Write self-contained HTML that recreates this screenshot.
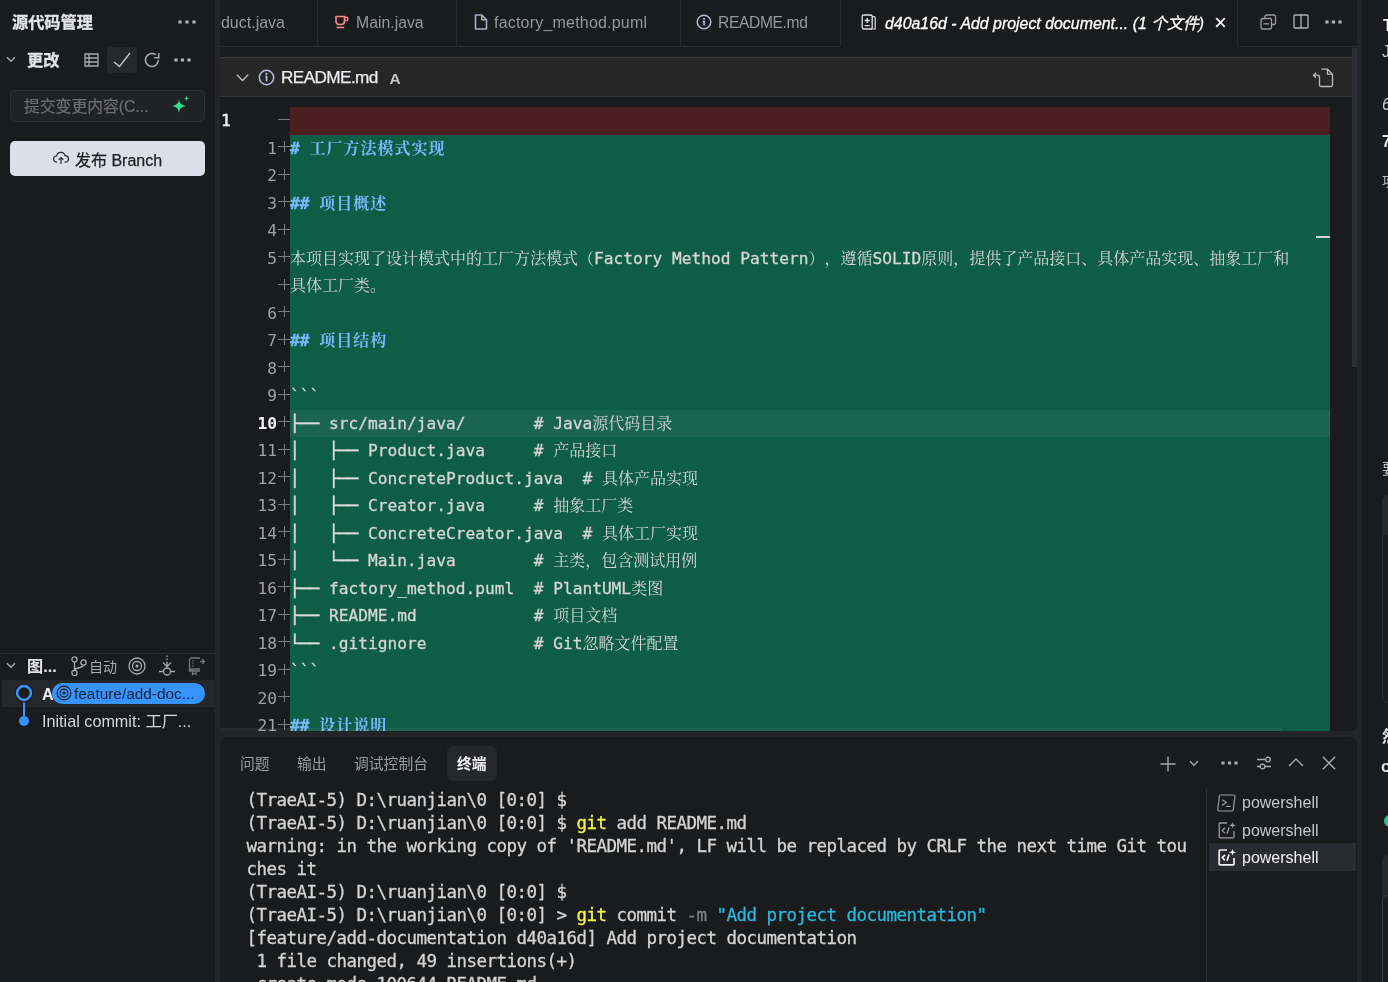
<!DOCTYPE html>
<html lang="zh-CN">
<head>
<meta charset="utf-8">
<title>源代码管理</title>
<style>
*{box-sizing:border-box;margin:0;padding:0}
html,body{width:1388px;height:982px;overflow:hidden;background:#1a1b1d}
body{position:relative;font-family:"Liberation Sans","Noto Sans CJK SC",sans-serif;color:#d0d1d6;font-size:16px}
.abs{position:absolute}
.t{position:absolute;white-space:pre;line-height:1}
svg{position:absolute;overflow:visible}
/* sidebar */
#sidebar{position:absolute;left:0;top:0;width:215px;height:982px;background:#1a1b1d}
#sash1{position:absolute;left:215px;top:0;width:5px;height:982px;background:#222326}
/* editor */
#tabs{position:absolute;left:220px;top:0;width:1137px;height:47px;background:#1a1b1d;overflow:hidden}
.tabsep{position:absolute;top:0;width:1px;height:46px;background:#2a2b2e}
#hdr{position:absolute;left:220px;top:57px;width:1132px;height:40px;background:#262626;border-top:1px solid #383838;border-bottom:1px solid #383838}
#code{position:absolute;left:220px;top:97px;width:1137px;height:634px;overflow:hidden;border-radius:0 0 7px 0;font-family:"DejaVu Sans Mono","Liberation Mono","Noto Serif CJK SC",monospace;font-size:16.2px;text-spacing-trim:space-all;-webkit-text-stroke:0.3px}
.row{position:absolute;left:0;height:27.5px;line-height:27.5px;white-space:pre}
.ln{position:absolute;right:1080px;top:0;color:#a0a1a6;text-align:right;-webkit-text-stroke:0}
.b{-webkit-text-stroke:0.500px;color:#dcdcdc}
.pl{position:absolute;left:58px;top:11.500px;width:12px;height:1px;background:#7a7b80}
.pl:after{content:"";position:absolute;left:5.5px;top:-5px;width:1px;height:11px;background:#7a7b80}
.tx{position:absolute;left:70px;top:0;color:#d6d6d6}
.h{color:#79b8ff;font-weight:bold}
.z{font-size:16px;text-spacing-trim:space-all;-webkit-text-stroke:0}
.h .z{letter-spacing:1px}
/* terminal */
#term{position:absolute;left:220px;top:737px;width:1137px;height:245px;background:#1a1b1d;border-top-left-radius:8px;border-top-right-radius:8px;overflow:hidden}
.tl{position:absolute;left:26.400px;white-space:pre;font-family:"DejaVu Sans Mono","Liberation Mono",monospace;font-size:17.5px;letter-spacing:-0.535px;line-height:23px;height:23px;color:#d4d4d4;-webkit-text-stroke:0.3px}
.y{color:#f5f543}.c{color:#29b8db}.g{color:#7f8085}
</style>
</head>
<body>
<div id="root" style="position:absolute;left:0;top:0;width:1388px;height:982px;will-change:transform">
<div id="sidebar">
<div class="t" style="left:12px;top:14px;font-size:16.200px;font-weight:bold;color:#e4e5ea;-webkit-text-stroke:0.300px">源代码管理</div>
<svg style="left:178px;top:20px" width="18" height="4" viewBox="0 0 18 4"><rect x="0.4" y="0.600" width="3.200" height="2.800" rx="0.200" fill="#b4b5ba"/><rect x="7.4" y="0.600" width="3.200" height="2.800" rx="0.200" fill="#b4b5ba"/><rect x="14.4" y="0.600" width="3.200" height="2.800" rx="0.200" fill="#b4b5ba"/></svg>
<!-- changes row -->
<svg style="left:6px;top:56px" width="10" height="7" viewBox="0 0 10 7"><path d="M1 1.2 L5 5.2 L9 1.2" fill="none" stroke="#a9aab0" stroke-width="1.4"/></svg>
<div class="t" style="left:27px;top:52px;font-size:16.200px;font-weight:bold;color:#e4e5ea;-webkit-text-stroke:0.300px">更改</div>
<svg style="left:84px;top:53px" width="15" height="14" viewBox="0 0 15 14"><path d="M1 1 H14 V13 H1 Z M1 5 H14 M1 9 H14 M5 1 V13" fill="none" stroke="#a9aab0" stroke-width="1.3"/></svg>
<div class="abs" style="left:107px;top:47px;width:30px;height:26px;background:#26272a;border-radius:3px"></div>
<svg style="left:113px;top:52px" width="18" height="16" viewBox="0 0 18 16"><path d="M1 10 L6.5 14.5 L17 1" fill="none" stroke="#c8c9ce" stroke-width="1.3"/></svg>
<svg style="left:144px;top:52px" width="16" height="16" viewBox="0 0 16 16"><path d="M14.400 8 A6.500 6.500 0 1 1 11.700 2.700" fill="none" stroke="#a9aab0" stroke-width="1.600"/><path d="M10.200 5.700 H14.700 V1.200" fill="none" stroke="#a9aab0" stroke-width="1.600"/></svg>
<svg style="left:174px;top:58px" width="17" height="4" viewBox="0 0 17 4"><rect x="0.4" y="0.600" width="3.200" height="2.800" rx="0.200" fill="#b4b5ba"/><rect x="6.9" y="0.600" width="3.200" height="2.800" rx="0.200" fill="#b4b5ba"/><rect x="13.4" y="0.600" width="3.200" height="2.800" rx="0.200" fill="#b4b5ba"/></svg>
<!-- input -->
<div class="abs" style="left:10px;top:90px;width:195px;height:32px;background:#212225;border:1px solid #2f3034;border-radius:5px"></div>
<div class="t" style="left:24px;top:99px;font-size:15.8px;color:#6e6f74;-webkit-text-stroke:0.2px">提交变更内容(C...</div>
<svg style="left:171px;top:95px" width="19" height="19" viewBox="0 0 19 19"><path d="M8 4 C8.6 8.6 9.4 9.4 15 11 C9.4 12.6 8.6 13.4 8 18 C7.4 13.4 6.6 12.6 1 11 C6.6 9.4 7.4 8.6 8 4 Z" fill="#32e08c"/><path d="M15.5 0.5 C15.8 2.6 16.1 2.9 18 3.4 C16.1 3.9 15.8 4.2 15.5 6.3 C15.2 4.2 14.9 3.9 13 3.4 C14.9 2.9 15.2 2.6 15.5 0.5 Z" fill="#32e08c"/></svg>
<!-- button -->
<div class="abs" style="left:10px;top:141px;width:195px;height:35px;background:#dcdee8;border-radius:5px"></div>
<svg style="left:53px;top:151px" width="16" height="14" viewBox="0 0 16 14"><path d="M4.2 11.2 H3.8 A3.1 3.1 0 0 1 3.6 5 A4.3 4.3 0 0 1 12 4.6 A3.3 3.3 0 0 1 12.4 11.2 H11.6" fill="none" stroke="#2a2b30" stroke-width="1.2"/><path d="M8 13 V6.6 M5.6 8.9 L8 6.5 L10.4 8.9" fill="none" stroke="#2a2b30" stroke-width="1.2"/></svg>
<div class="t" style="left:75px;top:152.500px;font-size:16px;color:#1e1f23;-webkit-text-stroke:0.25px">发布 Branch</div>
<!-- graph -->
<div class="abs" style="left:0;top:653px;width:215px;height:1px;background:#2b2c30"></div>
<svg style="left:6px;top:662px" width="10" height="7" viewBox="0 0 10 7"><path d="M1 1.2 L5 5.2 L9 1.2" fill="none" stroke="#a9aab0" stroke-width="1.4"/></svg>
<div class="t" style="left:27px;top:658px;font-size:16.2px;font-weight:bold;color:#e4e5ea">图...</div>
<svg style="left:70px;top:656px" width="18" height="21" viewBox="0 0 18 21"><circle cx="4.5" cy="3.5" r="2.6" fill="none" stroke="#a9aab0" stroke-width="1.3"/><circle cx="4.5" cy="17" r="2.6" fill="none" stroke="#a9aab0" stroke-width="1.3"/><circle cx="13.5" cy="6.5" r="2.6" fill="none" stroke="#a9aab0" stroke-width="1.3"/><path d="M4.5 6.1 V14.4 M13.5 9.1 C13.5 12.5 4.5 11 4.5 14.4" fill="none" stroke="#a9aab0" stroke-width="1.3"/></svg>
<div class="t" style="left:89px;top:660px;font-size:14px;color:#a9aab0">自动</div>
<svg style="left:128px;top:657px" width="18" height="18" viewBox="0 0 18 18"><circle cx="9" cy="9" r="8" fill="none" stroke="#a9aab0" stroke-width="1.3"/><circle cx="9" cy="9" r="4.5" fill="none" stroke="#a9aab0" stroke-width="1.3"/><circle cx="9" cy="9" r="1.6" fill="#a9aab0"/></svg>
<svg style="left:158px;top:655px" width="18" height="22" viewBox="0 0 18 22"><path d="M9 0.5 V2 M9 3.5 V5 M9 6.5 V11.5 M5 7.5 L9 11.5 L13 7.5" fill="none" stroke="#a9aab0" stroke-width="1.3"/><circle cx="9" cy="16.5" r="3.5" fill="none" stroke="#a9aab0" stroke-width="1.3"/><path d="M1 16.5 H5.5 M12.5 16.5 H17" fill="none" stroke="#a9aab0" stroke-width="1.3"/></svg>
<svg style="left:188px;top:657px" width="18" height="18" viewBox="0 0 18 18"><path d="M12 1 H3.5 A2 2 0 0 0 1.5 3 V14 H12" fill="none" stroke="#77787d" stroke-width="1.3"/><path d="M1.5 14 A2 2 0 0 1 3.5 12 H12" fill="none" stroke="#77787d" stroke-width="1.3"/><path d="M4.5 4 H5.5 M4.5 6.5 H5.5 M4.5 9 H5.5" stroke="#77787d" stroke-width="1.3"/><path d="M12 4.5 H16.5 M14.3 2.3 L16.5 4.5 L14.3 6.7" fill="none" stroke="#77787d" stroke-width="1.3"/><path d="M4.5 14 V17.5 L6.2 16.3 L8 17.5 V14" fill="none" stroke="#77787d" stroke-width="1.2"/></svg>
<div class="abs" style="left:2px;top:680px;width:213px;height:27px;background:#26272b"></div>
<div class="abs" style="left:23.300px;top:700px;width:1.400px;height:16px;background:#3794ff"></div>
<svg style="left:14px;top:683px" width="20" height="20" viewBox="0 0 20 20"><circle cx="10" cy="10" r="9.400" fill="#1a1b1d"/><circle cx="10" cy="10" r="6.900" fill="#1a1b1d" stroke="#3794ff" stroke-width="2.500"/></svg>
<div class="t" style="left:42px;top:686px;font-size:16.2px;font-weight:bold;color:#f0f0f3">A</div>
<div class="abs" style="left:52px;top:682.500px;width:153px;height:21.500px;background:#3794ff;border-radius:10.750px"></div>
<svg style="left:56px;top:685px" width="16" height="16" viewBox="0 0 16 16"><circle cx="8" cy="8" r="6.9" fill="none" stroke="#1a1b1d" stroke-width="1.1"/><circle cx="8" cy="8" r="3.9" fill="none" stroke="#1a1b1d" stroke-width="1.1"/><circle cx="8" cy="8" r="1.4" fill="#1a1b1d"/></svg>
<div class="t" style="left:74px;top:686px;font-size:15.4px;color:#14233a">feature/add-doc...</div>
<svg style="left:18px;top:715px" width="12" height="12" viewBox="0 0 12 12"><circle cx="6" cy="6" r="5" fill="#3794ff"/></svg>
<div class="t" style="left:42px;top:713px;font-size:16.2px;color:#d6d7dc">Initial commit: 工厂...</div>
</div>
<div class="abs" style="left:215px;top:0;width:1147px;height:982px;background:#232427"></div>
<div class="abs" style="left:220px;top:0;width:1137px;height:731px;background:#1a1b1d;border-radius:0 0 7px 0"></div>
<div id="tabs">
<div class="abs" style="left:0;top:46px;width:620px;height:1px;background:#2a2b2e"></div>
<div class="abs" style="left:1017px;top:46px;width:120px;height:1px;background:#2a2b2e"></div>
<div class="t" style="right:1072px;top:15px;font-size:16px;color:#96979f">Product.java</div>
<div class="tabsep" style="left:97px"></div>
<svg style="left:114px;top:14px" width="16" height="16" viewBox="0 0 16 16"><path d="M2 2.500 H10.500 V7.300 A3.200 3.200 0 0 1 7.300 10.500 H5.200 A3.200 3.200 0 0 1 2 7.300 Z" fill="none" stroke="#f08a85" stroke-width="1.600" stroke-linejoin="round"/><path d="M10.500 3.200 H12.200 A1.700 1.700 0 0 1 12.200 6.600 H10.500" fill="none" stroke="#f08a85" stroke-width="1.500"/><path d="M2.600 13.500 H10.200" stroke="#f08a85" stroke-width="1.600"/></svg>
<div class="t" style="left:136px;top:15px;font-size:15.8px;color:#96979f">Main.java</div>
<div class="tabsep" style="left:236px"></div>
<svg style="left:254px;top:14px" width="14" height="16" viewBox="0 0 14 16"><path d="M1.500 1 H7.800 L12.500 5.700 V15 H1.500 Z M7.800 1 V5.700 H12.500" fill="none" stroke="#a9aec6" stroke-width="1.600" stroke-linejoin="round"/></svg>
<div class="t" style="left:274px;top:15px;font-size:16px;letter-spacing:0.2px;color:#96979f">factory_method.puml</div>
<div class="tabsep" style="left:460px"></div>
<svg style="left:476px;top:14px" width="16" height="16" viewBox="0 0 16 16"><circle cx="8" cy="8" r="6.800" fill="none" stroke="#aeb4d2" stroke-width="1.500"/><path d="M6.900 7.200 H8.100 V11.600" fill="none" stroke="#aeb4d2" stroke-width="1.600"/><circle cx="8" cy="4.700" r="1.050" fill="#aeb4d2"/></svg>
<div class="t" style="left:498px;top:15px;font-size:15.600px;letter-spacing:-0.350px;color:#96979f">README.md</div>
<div class="tabsep" style="left:620px"></div>
<svg style="left:641px;top:14px" width="16" height="16" viewBox="0 0 16 16"><path d="M1.200 2.400 A1.400 1.400 0 0 1 2.600 1 H9.800 A1.400 1.400 0 0 1 11.200 2.400 V13.600 A1.400 1.400 0 0 1 9.800 15 H2.600 A1.400 1.400 0 0 1 1.200 13.600 Z" fill="none" stroke="#e4e4e8" stroke-width="1.300"/><path d="M11.200 2.600 H12.800 A1.400 1.400 0 0 1 14.200 4 V15 H10" fill="none" stroke="#e4e4e8" stroke-width="1.200"/><path d="M3.700 6.500 H8.700 M6.200 4 V9 M3.700 11.600 H8.700" stroke="#e4e4e8" stroke-width="1.300"/></svg>
<div class="t" style="left:665px;top:15.500px;font-size:15.900px;font-style:italic;color:#ffffff;-webkit-text-stroke:0.300px">d40a16d - Add project document... (1 个文件)</div>
<svg style="left:995px;top:17px" width="11" height="11" viewBox="0 0 11 11"><path d="M1.2 1.2 L9.8 9.8 M9.8 1.2 L1.2 9.8" stroke="#f0f0f3" stroke-width="1.9"/></svg>
<div class="tabsep" style="left:1017px"></div>
<svg style="left:1040px;top:14px" width="17" height="16" viewBox="0 0 17 16"><path d="M5 4 V2.5 A1.5 1.5 0 0 1 6.5 1 H14 A1.5 1.5 0 0 1 15.5 2.500 V9 A1.500 1.500 0 0 1 14 10.500 H12" fill="none" stroke="#9c9da3" stroke-width="1.3"/><rect x="1" y="4.500" width="10.500" height="10.500" rx="1.500" fill="none" stroke="#9c9da3" stroke-width="1.3"/><path d="M3.500 9.800 H9" stroke="#9c9da3" stroke-width="1.3"/></svg>
<svg style="left:1073px;top:14px" width="16" height="15" viewBox="0 0 16 15"><rect x="1" y="1" width="14" height="13" rx="1" fill="none" stroke="#b4b5ba" stroke-width="1.3"/><path d="M8 1 V14" stroke="#b4b5ba" stroke-width="1.3"/></svg>
<svg style="left:1105px;top:20px" width="17" height="4" viewBox="0 0 17 4"><rect x="0.4" y="0.600" width="3.200" height="2.800" rx="0.200" fill="#b4b5ba"/><rect x="6.9" y="0.600" width="3.200" height="2.800" rx="0.200" fill="#b4b5ba"/><rect x="13.4" y="0.600" width="3.200" height="2.800" rx="0.200" fill="#b4b5ba"/></svg>
</div>
<div id="hdr">
<svg style="left:16px;top:16px" width="13" height="8" viewBox="0 0 13 8"><path d="M0.800 0.800 L6.500 6.500 L12.200 0.800" fill="none" stroke="#c0c1c6" stroke-width="1.300"/></svg>
<svg style="left:38px;top:11px" width="17" height="17" viewBox="0 0 17 17"><circle cx="8.500" cy="8.500" r="7.200" fill="none" stroke="#b8bfdc" stroke-width="1.500"/><path d="M7.300 7.600 H8.600 V12.300" fill="none" stroke="#b8bfdc" stroke-width="1.700"/><circle cx="8.500" cy="4.900" r="1.100" fill="#b8bfdc"/></svg>
<div class="t" style="left:61px;top:11px;font-size:17.200px;letter-spacing:-0.600px;color:#ececf0;-webkit-text-stroke:0.250px">README.md</div>
<div class="t" style="left:169.500px;top:12.500px;font-size:15.500px;font-weight:bold;color:#c4c5ca">A</div>
<svg style="left:1092px;top:10px" width="22" height="20" viewBox="0 0 22 20"><path d="M9.500 1.200 H15.500 L20.500 6.200 V17 A1.500 1.500 0 0 1 19 18.500 H9 A1.500 1.500 0 0 1 7.500 17 V9.500 A2.300 2.300 0 0 0 5.200 7.200 H1.500" fill="none" stroke="#b9bac0" stroke-width="1.300"/><path d="M15.500 1.200 V6.200 H20.500" fill="none" stroke="#b9bac0" stroke-width="1.300"/><path d="M4 4.700 L1.500 7.200 L4 9.700" fill="none" stroke="#b9bac0" stroke-width="1.300"/></svg>
</div>
<div class="abs" style="left:1352px;top:48px;width:5px;height:319px;background:#2d2e31"></div>
<div id="code">
<div class="abs" style="left:70px;top:10px;width:1040px;height:27.5px;background:#4b1f20"></div>
<div class="abs" style="left:70px;top:37.5px;width:1040px;height:600px;background:#0e5d45"></div>
<div class="abs" style="left:70px;top:312.5px;width:1040px;height:27.5px;background:#19654f"></div>
<div class="abs" style="left:1096px;top:139px;width:14px;height:2px;background:#cfd0d4"></div>
<div class="row" style="top:10.0px;width:1137px"><span class="abs" style="left:1px;top:0;color:#f0f0f3;-webkit-text-stroke:0.500px">1</span><span class="abs" style="left:58px;top:12px;width:12px;height:1px;background:#7a7b80"></span></div>
<div class="row" style="top:37.5px;width:1137px"><span class="ln">1</span><span class="pl"></span><span class="tx"><span class="h"># <span class="z">工厂方法模式实现</span></span></span></div>
<div class="row" style="top:65.0px;width:1137px"><span class="ln">2</span><span class="pl"></span><span class="tx"></span></div>
<div class="row" style="top:92.5px;width:1137px"><span class="ln">3</span><span class="pl"></span><span class="tx"><span class="h">## <span class="z">项目概述</span></span></span></div>
<div class="row" style="top:120.0px;width:1137px"><span class="ln">4</span><span class="pl"></span><span class="tx"></span></div>
<div class="row" style="top:147.5px;width:1137px"><span class="ln">5</span><span class="pl"></span><span class="tx"><span class="z">本项目实现了设计模式中的工厂方法模式（</span>Factory Method Pattern<span class="z">），遵循</span>SOLID<span class="z">原则，提供了产品接口、具体产品实现、抽象工厂和</span></span></div>
<div class="row" style="top:175.0px;width:1137px"><span class="ln"></span><span class="pl"></span><span class="tx"><span class="z">具体工厂类。</span></span></div>
<div class="row" style="top:202.5px;width:1137px"><span class="ln">6</span><span class="pl"></span><span class="tx"></span></div>
<div class="row" style="top:230.0px;width:1137px"><span class="ln">7</span><span class="pl"></span><span class="tx"><span class="h">## <span class="z">项目结构</span></span></span></div>
<div class="row" style="top:257.5px;width:1137px"><span class="ln">8</span><span class="pl"></span><span class="tx"></span></div>
<div class="row" style="top:285.0px;width:1137px"><span class="ln">9</span><span class="pl"></span><span class="tx">```</span></div>
<div class="row" style="top:312.5px;width:1137px"><span class="ln" style="color:#f4f4f6;font-weight:bold">10</span><span class="pl"></span><span class="tx"><span class="b">├──</span> src/main/java/       # Java<span class="z">源代码目录</span></span></div>
<div class="row" style="top:340.0px;width:1137px"><span class="ln">11</span><span class="pl"></span><span class="tx"><span class="b">│</span>   <span class="b">├──</span> Product.java     # <span class="z">产品接口</span></span></div>
<div class="row" style="top:367.5px;width:1137px"><span class="ln">12</span><span class="pl"></span><span class="tx"><span class="b">│</span>   <span class="b">├──</span> ConcreteProduct.java  # <span class="z">具体产品实现</span></span></div>
<div class="row" style="top:395.0px;width:1137px"><span class="ln">13</span><span class="pl"></span><span class="tx"><span class="b">│</span>   <span class="b">├──</span> Creator.java     # <span class="z">抽象工厂类</span></span></div>
<div class="row" style="top:422.5px;width:1137px"><span class="ln">14</span><span class="pl"></span><span class="tx"><span class="b">│</span>   <span class="b">├──</span> ConcreteCreator.java  # <span class="z">具体工厂实现</span></span></div>
<div class="row" style="top:450.0px;width:1137px"><span class="ln">15</span><span class="pl"></span><span class="tx"><span class="b">│</span>   <span class="b">└──</span> Main.java        # <span class="z">主类，包含测试用例</span></span></div>
<div class="row" style="top:477.5px;width:1137px"><span class="ln">16</span><span class="pl"></span><span class="tx"><span class="b">├──</span> factory_method.puml  # PlantUML<span class="z">类图</span></span></div>
<div class="row" style="top:505.0px;width:1137px"><span class="ln">17</span><span class="pl"></span><span class="tx"><span class="b">├──</span> README.md            # <span class="z">项目文档</span></span></div>
<div class="row" style="top:532.5px;width:1137px"><span class="ln">18</span><span class="pl"></span><span class="tx"><span class="b">└──</span> .gitignore           # Git<span class="z">忽略文件配置</span></span></div>
<div class="row" style="top:560.0px;width:1137px"><span class="ln">19</span><span class="pl"></span><span class="tx">```</span></div>
<div class="row" style="top:587.5px;width:1137px"><span class="ln">20</span><span class="pl"></span><span class="tx"></span></div>
<div class="row" style="top:615.0px;width:1137px"><span class="ln">21</span><span class="pl"></span><span class="tx"><span class="h">## <span class="z">设计说明</span></span></span></div>
<div class="abs" style="left:0;top:631px;width:1061px;height:3px;background:rgba(160,165,175,0.110)"></div>
</div>
<div id="term">
<div class="t" style="left:20px;top:20px;font-size:14.8px;color:#9a9ba1">问题</div>
<div class="t" style="left:77px;top:20px;font-size:14.8px;color:#9a9ba1">输出</div>
<div class="t" style="left:134px;top:20px;font-size:14.8px;color:#9a9ba1">调试控制台</div>
<div class="abs" style="left:227px;top:9px;width:50px;height:35px;background:#26272b;border-radius:6px"></div>
<div class="t" style="left:237px;top:20px;font-size:14.8px;font-weight:bold;color:#f2f2f5">终端</div>
<div class="tl" style="top:52.1px">(TraeAI-5) D:\ruanjian\0 [0:0] $ </div>
<div class="tl" style="top:75.1px">(TraeAI-5) D:\ruanjian\0 [0:0] $ <span class="y">git</span> add README.md</div>
<div class="tl" style="top:98.1px">warning: in the working copy of 'README.md', LF will be replaced by CRLF the next time Git tou</div>
<div class="tl" style="top:121.1px">ches it</div>
<div class="tl" style="top:144.1px">(TraeAI-5) D:\ruanjian\0 [0:0] $ </div>
<div class="tl" style="top:167.1px">(TraeAI-5) D:\ruanjian\0 [0:0] &gt; <span class="y">git</span> commit <span class="g">-m</span> <span class="c">"Add project documentation"</span></div>
<div class="tl" style="top:190.1px">[feature/add-documentation d40a16d] Add project documentation</div>
<div class="tl" style="top:213.1px"> 1 file changed, 49 insertions(+)</div>
<div class="tl" style="top:236.1px"> create mode 100644 README.md</div>
<svg style="left:940px;top:19px" width="16" height="16" viewBox="0 0 16 16"><path d="M8 0.500 V15.500 M0.500 8 H15.500" stroke="#a9aab3" stroke-width="1.400"/></svg>
<svg style="left:969px;top:23px" width="10" height="7" viewBox="0 0 10 7"><path d="M1 1.200 L5 5.200 L9 1.200" fill="none" stroke="#a9aab3" stroke-width="1.400"/></svg>
<svg style="left:1001px;top:24px" width="17" height="4" viewBox="0 0 17 4"><rect x="0.4" y="0.600" width="3.200" height="2.800" rx="0.200" fill="#a9aab3"/><rect x="6.9" y="0.600" width="3.200" height="2.800" rx="0.200" fill="#a9aab3"/><rect x="13.4" y="0.600" width="3.200" height="2.800" rx="0.200" fill="#a9aab3"/></svg>
<svg style="left:1036px;top:18px" width="16" height="16" viewBox="0 0 16 16"><path d="M1 4.500 H9.500 M1 11.500 H4 M9 11.500 H15" stroke="#a9aab3" stroke-width="1.300"/><circle cx="12" cy="4.500" r="2.300" fill="none" stroke="#a9aab3" stroke-width="1.300"/><circle cx="6.500" cy="11.500" r="2.300" fill="none" stroke="#a9aab3" stroke-width="1.300"/></svg>
<svg style="left:1068px;top:21px" width="16" height="9" viewBox="0 0 16 9"><path d="M1 8 L8 1 L15 8" fill="none" stroke="#a9aab3" stroke-width="1.400"/></svg>
<svg style="left:1102px;top:19px" width="14" height="14" viewBox="0 0 14 14"><path d="M0.800 0.800 L13.200 13.200 M13.200 0.800 L0.800 13.200" stroke="#a9aab3" stroke-width="1.400"/></svg>
<div class="abs" style="left:986px;top:51px;width:1px;height:200px;background:#2f3034"></div>
<div class="abs" style="left:989px;top:106px;width:147px;height:28px;background:#2a2b30"></div>
<svg style="left:997px;top:57px" width="19" height="18" viewBox="0 0 19 18"><path d="M3.300 1 H17 A1 1 0 0 1 18 2.200 L16.200 15.800 A1.300 1.300 0 0 1 15 17 H1.800 A1 1 0 0 1 0.800 15.800 L2.300 2.200 A1.300 1.300 0 0 1 3.300 1 Z" fill="none" stroke="#9a9ba1" stroke-width="1.200"/><path d="M5.300 5.800 L9.300 8.600 L4.800 11.600 M9 12.500 H13.500" fill="none" stroke="#9a9ba1" stroke-width="1.200"/></svg>
<svg style="left:998px;top:84px" width="19" height="18" viewBox="0 0 19 18"><path d="M9 2 H2 A0.800 0.800 0 0 0 1.200 2.800 V16 A0.800 0.800 0 0 0 2 16.800 H15.200 A0.800 0.800 0 0 0 16 16 V10" fill="none" stroke="#9a9ba1" stroke-width="1.3"/><path d="M7 6.800 L4.300 9.600 L7 12.400 M11 6.500 L9 12.700" fill="none" stroke="#9a9ba1" stroke-width="1.3"/><path d="M14.500 0.500 C14.900 3.300 15.400 3.800 18.300 4.300 C15.400 4.800 14.900 5.300 14.500 8.100 C14.100 5.300 13.600 4.800 10.700 4.300 C13.600 3.800 14.100 3.300 14.500 0.500 Z" fill="#9a9ba1"/></svg>
<svg style="left:998px;top:111px" width="19" height="18" viewBox="0 0 19 18"><path d="M9 2 H2 A0.800 0.800 0 0 0 1.200 2.800 V16 A0.800 0.800 0 0 0 2 16.800 H15.200 A0.800 0.800 0 0 0 16 16 V10" fill="none" stroke="#f2f2f5" stroke-width="1.7"/><path d="M7 6.800 L4.300 9.600 L7 12.400 M11 6.500 L9 12.700" fill="none" stroke="#f2f2f5" stroke-width="1.7"/><path d="M14.500 0.500 C14.900 3.300 15.400 3.800 18.300 4.300 C15.400 4.800 14.900 5.300 14.500 8.100 C14.100 5.300 13.600 4.800 10.700 4.300 C13.600 3.800 14.100 3.300 14.500 0.500 Z" fill="#f2f2f5"/></svg>
<div class="t" style="left:1022px;top:58px;font-size:16px;color:#c4c5ca">powershell</div>
<div class="t" style="left:1022px;top:86px;font-size:16px;color:#c4c5ca">powershell</div>
<div class="t" style="left:1022px;top:113px;font-size:16px;color:#f2f2f5">powershell</div>
</div>
<div id="right" class="abs" style="left:1362px;top:0;width:26px;height:982px;background:#1a1b1d;overflow:hidden">
<div class="t" style="left:21px;top:18px;font-size:16px;font-weight:bold;color:#f0f0f3">T</div>
<div class="t" style="left:20px;top:44px;font-size:16px;color:#d0d1d6">J</div>
<div class="t" style="left:20px;top:97px;font-size:16px;font-style:italic;color:#d0d1d6">6</div>
<div class="t" style="left:20px;top:134px;font-size:16px;font-weight:bold;color:#e4e5ea">7</div>
<div class="t" style="left:20px;top:175px;font-size:13px;color:#c4c5ca">项</div>
<div class="t" style="left:20px;top:461px;font-size:15px;color:#c4c5ca">要</div>
<div class="abs" style="left:20px;top:495px;width:40px;height:208px;border:1px solid #2e2f33;border-radius:6px;background:#1c1d20"></div>
<div class="abs" style="left:20px;top:495px;width:40px;height:40px;border-top-left-radius:6px;background:#26272b"></div>
<div class="t" style="left:20px;top:729px;font-size:16px;font-weight:bold;color:#e4e5ea">然</div>
<div class="t" style="left:19px;top:757.500px;font-size:17px;font-weight:bold;color:#e4e5ea">c</div>
<div class="abs" style="left:22px;top:815px;width:12px;height:12px;border-radius:6px;background:#2bc48a"></div>
<div class="abs" style="left:20px;top:854px;width:40px;height:140px;border-top-left-radius:7px;background:#26272b"></div>
<div class="abs" style="left:20px;top:895px;width:40px;height:100px;border:1px solid #3a3b40;border-top-left-radius:6px;background:#1c1d20"></div>
</div>
</div>
</body>
</html>
